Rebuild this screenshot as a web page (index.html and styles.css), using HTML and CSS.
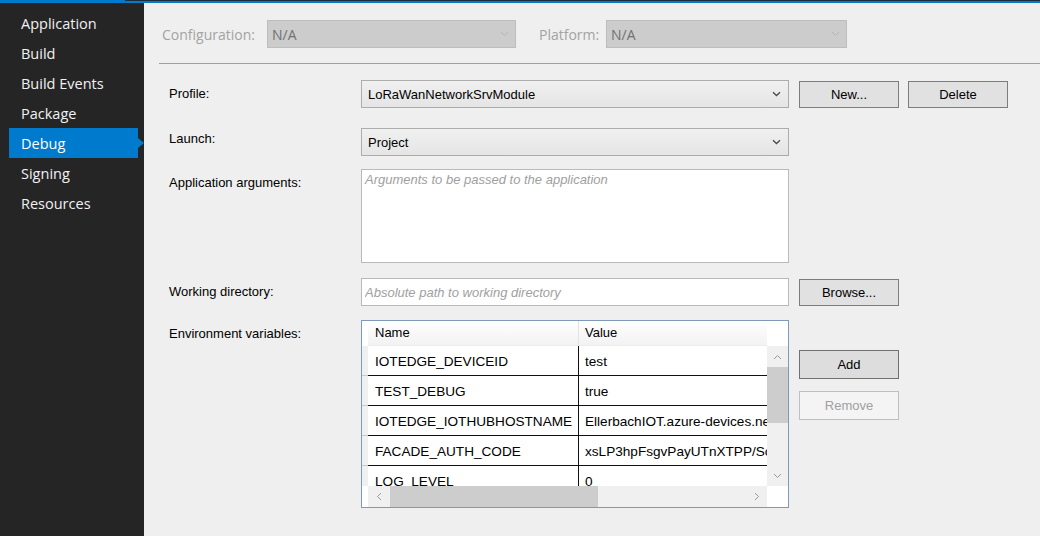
FILE: index.html
```html
<!DOCTYPE html>
<html>
<head>
<meta charset="utf-8">
<title>Debug</title>
<link rel="stylesheet" href="styles.css">
</head>
<body>
<div class="topbar"><div class="tb-left"></div><div class="tb-right"></div></div>
<div class="app">
  <nav class="sidebar">
    <div class="nav-item">Application</div>
    <div class="nav-item">Build</div>
    <div class="nav-item">Build Events</div>
    <div class="nav-item">Package</div>
    <div class="nav-item active">Debug</div>
    <div class="nav-item">Signing</div>
    <div class="nav-item">Resources</div>
  </nav>
  <main class="content">
    <div class="config-row">
      <span class="cfg-label cfg-label-config">Configuration:</span>
      <div class="cfg-select cfg-config"><span>N/A</span><svg class="chev" width="9" height="6" viewBox="0 0 9 6"><path d="M1 1 L4.5 4.5 L8 1" fill="none" stroke="#b4b4b4" stroke-width="1"/></svg></div>
      <span class="cfg-label cfg-label-platform">Platform:</span>
      <div class="cfg-select cfg-platform"><span>N/A</span><svg class="chev" width="9" height="6" viewBox="0 0 9 6"><path d="M1 1 L4.5 4.5 L8 1" fill="none" stroke="#b4b4b4" stroke-width="1"/></svg></div>
    </div>
    <div class="separator"></div>
    <div class="form">
      <div class="row row-profile">
        <div class="label">Profile:</div>
        <div class="combo"><span>LoRaWanNetworkSrvModule</span><svg class="chev" width="9" height="6" viewBox="0 0 9 6"><path d="M1 1.2 L4.5 4.5 L8 1.2" fill="none" stroke="#4a4a4a" stroke-width="1.3"/></svg></div>
        <button class="btn">New...</button>
        <button class="btn btn-delete">Delete</button>
      </div>
      <div class="row row-launch">
        <div class="label label-launch">Launch:</div>
        <div class="combo"><span>Project</span><svg class="chev" width="9" height="6" viewBox="0 0 9 6"><path d="M1 1.2 L4.5 4.5 L8 1.2" fill="none" stroke="#4a4a4a" stroke-width="1.3"/></svg></div>
      </div>
      <div class="row row-args">
        <div class="label">Application arguments:</div>
        <textarea class="textarea" placeholder="Arguments to be passed to the application"></textarea>
      </div>
      <div class="row row-wd">
        <div class="label">Working directory:</div>
        <input class="input" type="text" placeholder="Absolute path to working directory">
        <button class="btn">Browse...</button>
      </div>
      <div class="row row-env">
        <div class="label">Environment variables:</div>
        <div class="env">
          <div class="cell-white"></div>
          <div class="hdr">
            <div class="hdr-name">Name</div>
            <div class="hdr-value">Value</div>
          </div>
          <div class="cell-white"></div>
          <div class="rowhdr"></div>
          <div class="tbody">
            <div class="tr"><div class="td td-name">IOTEDGE_DEVICEID</div><div class="td td-value">test</div></div>
            <div class="tr"><div class="td td-name">TEST_DEBUG</div><div class="td td-value">true</div></div>
            <div class="tr"><div class="td td-name">IOTEDGE_IOTHUBHOSTNAME</div><div class="td td-value">EllerbachIOT.azure-devices.net</div></div>
            <div class="tr"><div class="td td-name">FACADE_AUTH_CODE</div><div class="td td-value">xsLP3hpFsgvPayUTnXTPP/ScQ4kzV</div></div>
            <div class="tr"><div class="td td-name">LOG_LEVEL</div><div class="td td-value">0</div></div>
          </div>
          <div class="vscroll">
            <div class="sb-arrow"><svg width="9" height="6" viewBox="0 0 9 6"><path d="M1 5 L4.5 1.5 L8 5" fill="none" stroke="#9a9a9a" stroke-width="1"/></svg></div>
            <div class="sb-thumb-v"></div>
            <div class="sb-fill"></div>
            <div class="sb-arrow"><svg width="9" height="6" viewBox="0 0 9 6"><path d="M1 1 L4.5 4.5 L8 1" fill="none" stroke="#9a9a9a" stroke-width="1"/></svg></div>
          </div>
          <div class="cell-white"></div>
          <div class="hscroll">
            <div class="sb-arrow"><svg width="6" height="9" viewBox="0 0 6 9"><path d="M5 1 L1.5 4.5 L5 8" fill="none" stroke="#9a9a9a" stroke-width="1"/></svg></div>
            <div class="sb-thumb-h"></div>
            <div class="sb-fill"></div>
            <div class="sb-arrow"><svg width="6" height="9" viewBox="0 0 6 9"><path d="M1 1 L4.5 4.5 L1 8" fill="none" stroke="#9a9a9a" stroke-width="1"/></svg></div>
          </div>
          <div class="cell-white"></div>
        </div>
        <div class="env-buttons">
          <button class="btn btn-default">Add</button>
          <button class="btn btn-disabled">Remove</button>
        </div>
      </div>
    </div>
  </main>
</div>
</body>
</html>
```

FILE: styles.css
```css
* { box-sizing: border-box; }

html, body {
  margin: 0;
  padding: 0;
}

body {
  width: 1040px;
  height: 536px;
  overflow: hidden;
  background: #efefef;
  font-family: "Liberation Sans", Arial, sans-serif;
  font-size: 13px;
  color: #000;
}

.topbar {
  display: flex;
  height: 3px;
}

.tb-left {
  width: 125px;
  background: #007acc;
}

.tb-right {
  flex: 1;
  background: #007acc;
  border-top: 1px solid #1c2c3c;
}

.app {
  display: flex;
  height: 533px;
}

.sidebar {
  width: 144px;
  flex: none;
  background: #252526;
  padding-top: 5px;
  font-family: "Open Sans", "Noto Sans", sans-serif;
  font-size: 14.5px;
  color: #f1f1f1;
}

.nav-item {
  height: 30px;
  line-height: 32px;
  padding-left: 21px;
}

.nav-item.active {
  position: relative;
  background: #007acc;
  margin-left: 9px;
  width: 129px;
  padding-left: 12px;
  color: #fff;
}

.nav-item.active::after {
  content: "";
  position: absolute;
  right: -6px;
  top: 10px;
  border-left: 6px solid #007acc;
  border-top: 5px solid transparent;
  border-bottom: 5px solid transparent;
}

.content {
  flex: 1;
  padding: 17px 0 0 18px;
}

.config-row {
  display: flex;
  align-items: center;
  height: 28px;
  font-family: "Open Sans", "Noto Sans", sans-serif;
  font-size: 14px;
}

.cfg-label {
  color: #a3a3a3;
}

.cfg-label-config {
  width: 105px;
}

.cfg-label-platform {
  width: 67px;
  margin-left: 23px;
}

.cfg-select {
  height: 28px;
  border: 1px solid #bdbdbd;
  background: #cccccc;
  color: #717171;
  display: flex;
  align-items: center;
  justify-content: space-between;
  padding: 0 6px 0 4px;
}

.cfg-config {
  width: 249px;
}

.cfg-platform {
  width: 241px;
}

.separator {
  height: 1px;
  background: #a0a0a0;
  margin: 15px 0 0 -3px;
}

.form {
  padding: 16px 0 0 7px;
}

.row {
  display: flex;
  align-items: flex-start;
}

.label {
  width: 192px;
  flex: none;
  padding-top: 6px;
  line-height: 15px;
}

.label-launch {
  padding-top: 3px;
}

.row-launch { margin-top: 20px; }
.row-args { margin-top: 13px; }
.row-wd { margin-top: 15px; }
.row-env { margin-top: 14px; }

.combo {
  width: 428px;
  height: 28px;
  border: 1px solid #acacac;
  background: linear-gradient(#f0f0f0, #e5e5e5);
  display: flex;
  align-items: center;
  justify-content: space-between;
  padding: 0 7px 0 6px;
}

.btn {
  width: 100px;
  height: 28px;
  margin-left: 10px;
  border: 1px solid #7d7d7d;
  background: #e1e1e1;
  font-family: "Liberation Sans", Arial, sans-serif;
  font-size: 13px;
  color: #000;
  padding: 0;
}

.row-profile .btn { margin-top: 1px; height: 27px; }
.row-wd .btn { margin-top: 1px; height: 27px; }

.btn-delete {
  margin-left: 9px;
}

.textarea {
  width: 428px;
  height: 94px;
  border: 1px solid #bababa;
  background: #fff;
  padding: 2px 3px;
  resize: none;
  font-family: "Liberation Sans", Arial, sans-serif;
  font-size: 13px;
  line-height: 15px;
  outline: none;
}

.input {
  width: 428px;
  height: 28px;
  border: 1px solid #bababa;
  background: #fff;
  padding: 0 3px;
  font-family: "Liberation Sans", Arial, sans-serif;
  font-size: 13px;
  outline: none;
}

.textarea::placeholder,
.input::placeholder {
  color: #a0a0a0;
  font-style: italic;
  opacity: 1;
}

.env {
  width: 428px;
  height: 188px;
  border: 1px solid #8199b9;
  background: #fff;
  display: grid;
  grid-template-columns: 6px 399px 21px;
  grid-template-rows: 25px 140px 21px;
  font-size: 13.6px;
}

.cell-white {
  background: #fff;
}

.hdr {
  display: flex;
  background: linear-gradient(#ffffff, #f2f2f2);
  line-height: 24px;
  border-bottom: 1px solid #ececec;
  font-size: 13px;
}

.hdr-name {
  width: 211px;
  padding-left: 7px;
  border-right: 1px solid #e2e2e2;
}

.hdr-value {
  flex: 1;
  padding-left: 6px;
}

.rowhdr {
  background: repeating-linear-gradient(#f0f0f0 0, #f0f0f0 29px, #c9c9c9 29px, #c9c9c9 30px);
}

.tbody {
  overflow: hidden;
}

.tr {
  display: flex;
  height: 30px;
  border-bottom: 1px solid #101010;
}

.td {
  white-space: nowrap;
  overflow: hidden;
  line-height: 29px;
  padding-top: 1px;
}

.td-name {
  width: 211px;
  flex: none;
  padding-left: 7px;
  border-right: 1px solid #101010;
}

.td-value {
  flex: 1;
  padding-left: 6px;
  text-overflow: clip;
}

.vscroll {
  background: #f0f0f0;
  display: flex;
  flex-direction: column;
}

.hscroll {
  background: #f0f0f0;
  display: flex;
}

.sb-arrow {
  width: 21px;
  height: 21px;
  flex: none;
  display: flex;
  align-items: center;
  justify-content: center;
}

.sb-thumb-v {
  height: 56px;
  background: #cdcdcd;
}

.sb-thumb-h {
  width: 208px;
  margin-left: 1px;
  background: #cdcdcd;
}

.sb-fill {
  flex: 1;
}

.env-buttons {
  display: flex;
  flex-direction: column;
  padding-top: 30px;
  gap: 12px;
}

.env-buttons .btn {
  height: 29px;
}

.btn-default {
  border-color: #707070;
  background: #dddddd;
}

.btn-disabled {
  border-color: #bfbfbf;
  background: #f4f4f4;
  color: #a0a0a0;
}
```
